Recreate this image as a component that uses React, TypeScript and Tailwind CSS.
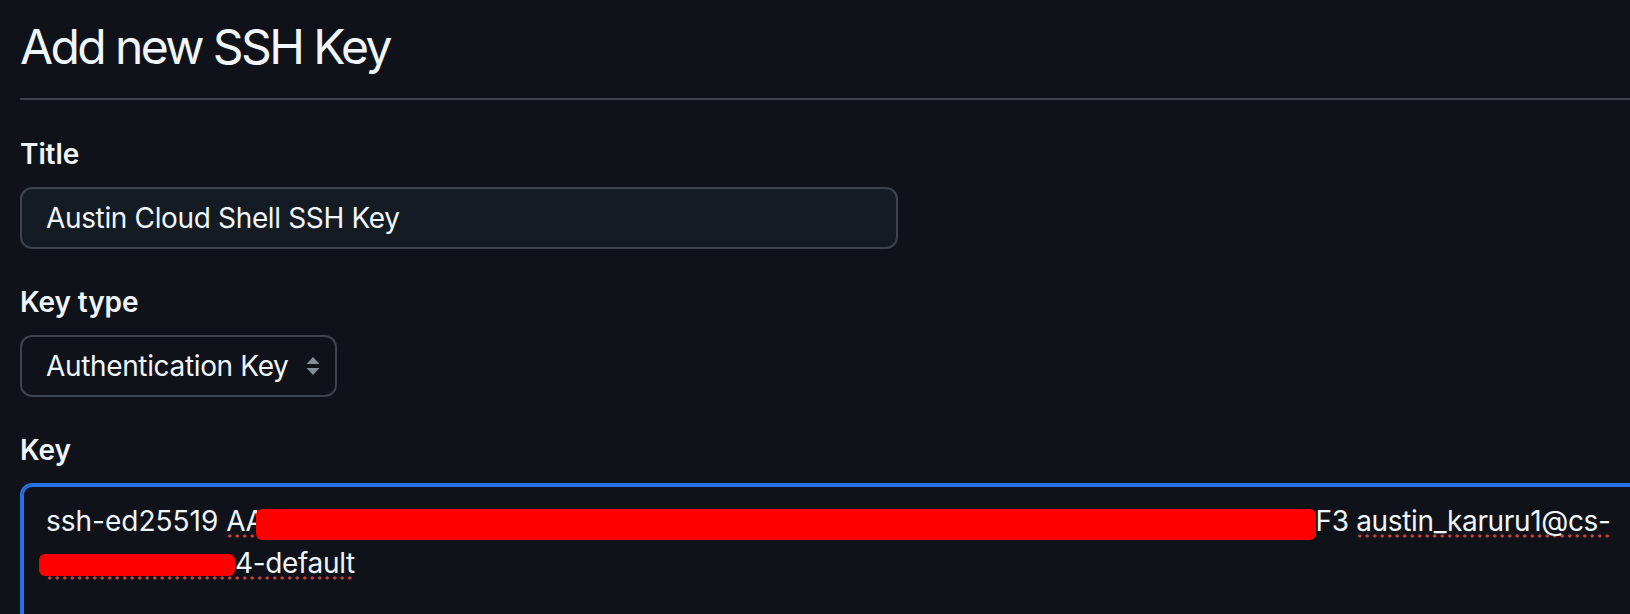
import React from "react";

function Dotted({ children }: { children: React.ReactNode }) {
  return (
    <span className="bg-[radial-gradient(circle,#d0403a_1.4px,transparent_1.8px)] bg-[length:7.5px_4px] bg-repeat-x bg-[position:0_100%]">
      {children}
    </span>
  );
}

export default function App() {
  return (
    <div className="w-[1630px] h-[614px] overflow-hidden bg-[#0f1219] text-[#f0f6fc] font-['Inter',sans-serif] tracking-[-0.35px]">
      <div className="pl-[20px] w-[1800px]">
        <div className="pt-[17px] pb-[21px] border-b-2 border-[#3d444d]">
          <h1 className="text-[48px] leading-[60px] font-normal tracking-[-2.6px]">Add new SSH Key</h1>
        </div>

        <div className="pt-[34px] flex flex-col">
          <label className="text-[28px] leading-[40px] font-semibold mb-[13px] tracking-[-0.1px]">Title</label>
          <div className="w-[878px] h-[62px] border-2 border-[#3d444d] rounded-[12px] bg-[#151b23] pl-[24px] py-[9px] text-[28px] leading-[40px]">
            Austin Cloud Shell SSH Key
          </div>

          <label className="mt-[33px] text-[28px] leading-[40px] font-semibold mb-[13px] tracking-[-0.1px]">Key type</label>
          <div className="w-[317px] h-[62px] border-2 border-[#3d444d] rounded-[12px] bg-[#0f1219] pl-[24px] pr-[15px] py-[9px] text-[28px] leading-[40px] flex items-center">
            <span>Authentication Key</span>
            <svg className="ml-auto" width="14" height="20" viewBox="0 0 14 20" fill="#858d97">
              <path d="M7 1 L13.5 8 L0.5 8 Z" />
              <path d="M0.5 12 L13.5 12 L7 19 Z" />
            </svg>
          </div>

          <label className="mt-[33px] text-[28px] leading-[40px] font-semibold mb-[13px] tracking-[-0.1px]">Key</label>
          <div className="w-[1700px] h-[200px] border-2 border-[#2872e6] shadow-[inset_0_0_0_2px_#2872e6] rounded-[12px] pl-[24px] pt-[15px] text-[28px] leading-[42px]">
            <div className="whitespace-nowrap">
              <span className="tracking-[0px]">ssh-ed25519 </span>
              <Dotted>
                AA
                <span className="inline-block w-[1060px] h-[31px] bg-[#ff0000] rounded-[6px] align-[-9px] ml-[-9px]"></span>
              </Dotted>
              F3 <Dotted>austin_karuru1@cs-</Dotted>
            </div>
            <div className="whitespace-nowrap">
              <Dotted>
                <span className="inline-block w-[196px] h-[22px] bg-[#ff0000] rounded-[6px] align-[-3px] ml-[-7px]"></span>
                4-default
              </Dotted>
            </div>
          </div>
        </div>
      </div>
    </div>
  );
}
